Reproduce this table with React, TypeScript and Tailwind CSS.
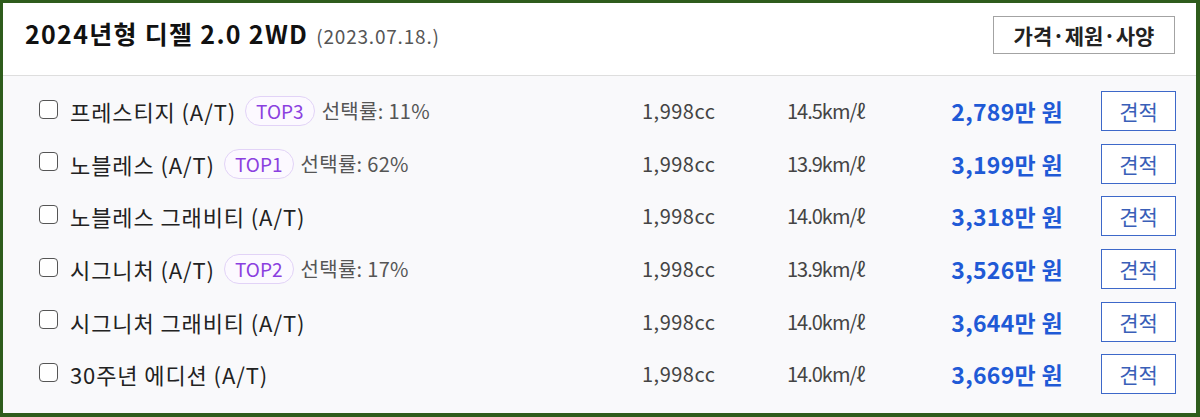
const FONT = '"Noto Sans CJK KR", "Noto Sans", sans-serif';

type Trim = {
  name: string;
  top?: string;
  rate?: string;
  fuel: string;
  price: string;
};

const trims: Trim[] = [
  { name: "프레스티지 (A/T)", top: "TOP3", rate: "11%", fuel: "14.5km/ℓ", price: "2,789" },
  { name: "노블레스 (A/T)", top: "TOP1", rate: "62%", fuel: "13.9km/ℓ", price: "3,199" },
  { name: "노블레스 그래비티 (A/T)", fuel: "14.0km/ℓ", price: "3,318" },
  { name: "시그니처 (A/T)", top: "TOP2", rate: "17%", fuel: "13.9km/ℓ", price: "3,526" },
  { name: "시그니처 그래비티 (A/T)", fuel: "14.0km/ℓ", price: "3,644" },
  { name: "30주년 에디션 (A/T)", fuel: "14.0km/ℓ", price: "3,669" },
];

function TrimRow({ trim }: { trim: Trim }) {
  return (
    <div className="flex items-center h-[52.6px] pl-[36px] pr-[20px]">
      <div className="flex-1 flex items-center min-w-0">
        <span className="w-[19px] h-[19px] rounded-[4px] border-[1.5px] border-[#555] bg-white shrink-0 mb-[4px]" />
        <span className="ml-[12px] text-[22px] leading-[28px] text-[#222] tracking-[0.9px]">{trim.name}</span>
        {trim.top && (
          <>
            <span className="ml-[9px] h-[30px] px-[10px] flex items-center rounded-full border border-[#e2d3f7] bg-[#fcf9ff] text-[19px] leading-[22px] text-[#8b3fe0]">
              {trim.top}
            </span>
            <span className="ml-[7px] text-[20px] leading-[24px] text-[#555] tracking-[0.3px]">선택률: {trim.rate}</span>
          </>
        )}
      </div>
      <div className="w-[145px] text-[20px] leading-[24px] text-[#444] tracking-[0.5px]">1,998cc</div>
      <div className="w-[130px] text-[20px] leading-[24px] text-[#444] tracking-[-1px]">{trim.fuel}</div>
      <div className="w-[146px] text-right text-[23px] leading-[28px] font-bold text-[#1f5ad6] tracking-[0.3px]">
        {trim.price}만 원
      </div>
      <button className="ml-[38px] w-[75px] h-[40px] border border-[#3d68c9] bg-white text-[21px] leading-[24px] text-[#3a5fb8]">
        견적
      </button>
    </div>
  );
}

export default function App() {
  return (
    <div
      className="w-[1200px] h-[417px] border-t-[3px] border-l-[3px] border-r-[4px] border-b-[4px] border-[#2e5c1c] bg-[#f9f9fb] flex flex-col"
      style={{ fontFamily: FONT }}
    >
      {/* Header */}
      <div className="h-[73px] shrink-0 bg-white border-b border-[#dedede] flex items-center pl-[22px] pr-[21px] pb-[8px]">
        <div className="flex-1 flex items-baseline mb-[4px]">
          <span className="text-[25px] leading-[30px] font-bold text-[#111] tracking-[1.3px]">2024년형 디젤 2.0 2WD</span>
          <span className="ml-[8px] text-[19px] leading-[24px] text-[#555] tracking-[0.8px]">(2023.07.18.)</span>
        </div>
        <button className="w-[182px] h-[38px] border border-[#a3a3a3] bg-white text-[21px] leading-[24px] font-bold text-[#222]">
          가격·제원·사양
        </button>
      </div>

      {/* Trims */}
      <div className="pt-[9px]">
        {trims.map((t) => (
          <TrimRow key={t.name} trim={t} />
        ))}
      </div>
    </div>
  );
}
